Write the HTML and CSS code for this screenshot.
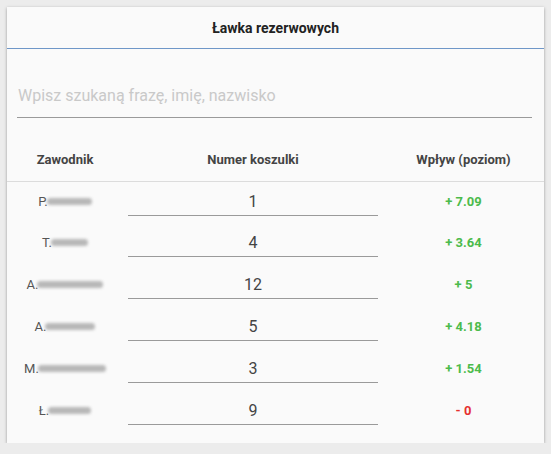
FILE: index.html
```html
<!DOCTYPE html>
<html lang="pl">
<head>
<meta charset="utf-8">
<title>Ławka rezerwowych</title>
<link rel="stylesheet" href="styles.css">
</head>
<body>
<div class="card">
  <div class="card-header">Ławka rezerwowych</div>
  <div class="search">
    <input class="search-input" type="text" placeholder="Wpisz szukaną frazę, imię, nazwisko">
  </div>
  <table class="bench">
    <colgroup>
      <col class="c-name"><col class="c-num"><col class="c-val">
    </colgroup>
    <thead>
      <tr><th>Zawodnik</th><th>Numer koszulki</th><th>Wpływ (poziom)</th></tr>
    </thead>
    <tbody>
      <tr>
        <td class="name">P.<span class="blur" style="width:45px"></span></td>
        <td class="num"><input class="num-input" type="text" value="1"></td>
        <td class="val plus">+ 7.09</td>
      </tr>
      <tr>
        <td class="name">T.<span class="blur" style="width:37px"></span></td>
        <td class="num"><input class="num-input" type="text" value="4"></td>
        <td class="val plus">+ 3.64</td>
      </tr>
      <tr>
        <td class="name">A.<span class="blur" style="width:66px"></span></td>
        <td class="num"><input class="num-input" type="text" value="12"></td>
        <td class="val plus">+ 5</td>
      </tr>
      <tr>
        <td class="name">A.<span class="blur" style="width:50px"></span></td>
        <td class="num"><input class="num-input" type="text" value="5"></td>
        <td class="val plus">+ 4.18</td>
      </tr>
      <tr>
        <td class="name">M.<span class="blur" style="width:68px"></span></td>
        <td class="num"><input class="num-input" type="text" value="3"></td>
        <td class="val plus">+ 1.54</td>
      </tr>
      <tr>
        <td class="name">Ł.<span class="blur" style="width:43px"></span></td>
        <td class="num"><input class="num-input" type="text" value="9"></td>
        <td class="val minus">- 0</td>
      </tr>
    </tbody>
  </table>
</div>
</body>
</html>
```

FILE: styles.css
```css
html, body {
  margin: 0;
  padding: 0;
}
body {
  background: #ececec;
  font-family: Roboto, "Liberation Sans", sans-serif;
  padding: 7px 7px 0 7px;
}
.card {
  width: 537px;
  background: #fafafa;
  box-shadow: 0 1px 3px rgba(0, 0, 0, 0.35);
  padding-bottom: 10px;
  box-sizing: border-box;
}
.card-header {
  height: 41px;
  line-height: 42px;
  text-align: center;
  font-size: 14px;
  font-weight: 700;
  color: #222;
  border-bottom: 1px solid #6f97c8;
}
.search {
  height: 69px;
  padding: 0 12px 0 10px;
  display: flex;
  align-items: flex-end;
}
.search-input {
  width: 100%;
  height: 40px;
  border: 0;
  border-bottom: 1px solid #9a9a9a;
  background: transparent;
  font-family: inherit;
  font-size: 16px;
  color: #333;
  padding: 0 0 5px 1px;
  margin: 0;
  outline: none;
  box-sizing: border-box;
}
.search-input::placeholder {
  color: #c9c9c9;
}
.bench {
  width: 537px;
  border-collapse: collapse;
  table-layout: fixed;
}
.c-name { width: 116px; }
.c-num { width: 260px; }
.c-val { width: 161px; }
.bench th {
  height: 63px;
  vertical-align: bottom;
  padding: 0 0 14px 0;
  font-size: 13px;
  font-weight: 700;
  color: #444;
  text-align: center;
  line-height: 15px;
  border-bottom: 1px solid #dcdcdc;
  box-sizing: border-box;
}
.bench tbody tr {
  height: 42px;
}
.bench td {
  padding: 0;
  vertical-align: top;
  text-align: center;
}
.name {
  font-size: 13px;
  color: #555;
  line-height: 15px;
  padding-top: 12px !important;
}
.blur {
  display: inline-block;
  height: 7px;
  background: #b8b8b8;
  filter: blur(1.6px);
  border-radius: 4px;
  vertical-align: 1px;
  margin-left: -1px;
}
.num {
  padding: 8px 5px 0 5px !important;
}
.num-input {
  width: 100%;
  height: 26px;
  border: 0;
  border-bottom: 1px solid #9a9a9a;
  background: transparent;
  text-align: center;
  font-family: inherit;
  font-size: 16px;
  color: #444;
  padding: 0 0 2px 0;
  margin: 0;
  box-sizing: border-box;
  outline: none;
}
.val {
  font-size: 13px;
  font-weight: 700;
  line-height: 15px;
  padding-top: 12px !important;
}
.plus { color: #4cbb4c; }
.minus { color: #e53030; }
```
